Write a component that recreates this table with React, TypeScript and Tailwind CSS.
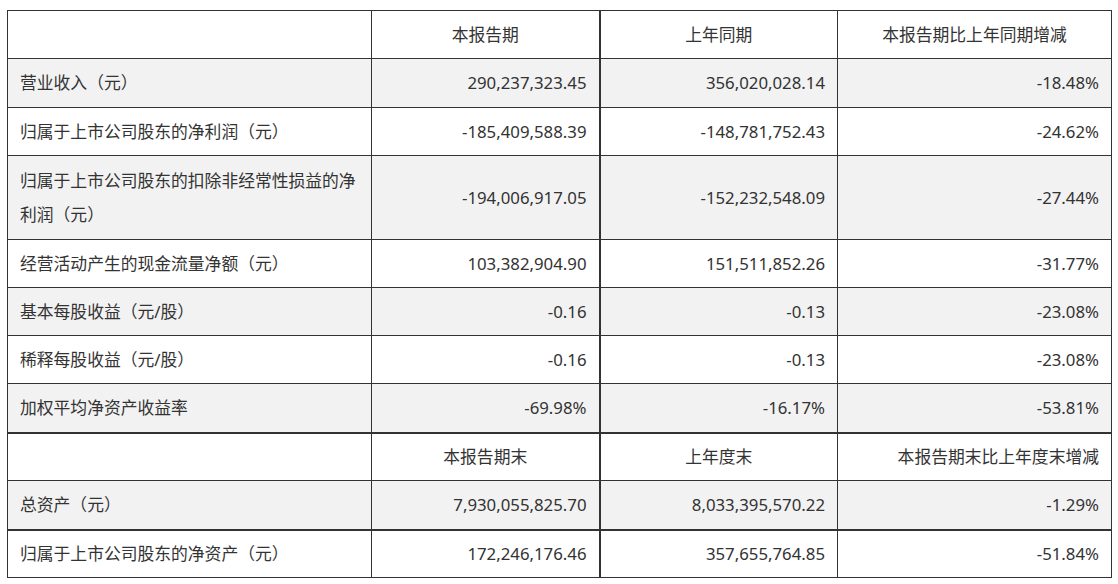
const rows1: [string, string, string, string][] = [
  ['营业收入（元）', '290,237,323.45', '356,020,028.14', '-18.48%'],
  ['归属于上市公司股东的净利润（元）', '-185,409,588.39', '-148,781,752.43', '-24.62%'],
  ['归属于上市公司股东的扣除非经常性损益的净利润（元）', '-194,006,917.05', '-152,232,548.09', '-27.44%'],
  ['经营活动产生的现金流量净额（元）', '103,382,904.90', '151,511,852.26', '-31.77%'],
  ['基本每股收益（元/股）', '-0.16', '-0.13', '-23.08%'],
  ['稀释每股收益（元/股）', '-0.16', '-0.13', '-23.08%'],
  ['加权平均净资产收益率', '-69.98%', '-16.17%', '-53.81%'],
];

const heights1 = ['h-[49px]', 'h-[48px]', 'h-[84px] leading-[34px]', 'h-[48px]', 'h-[48px]', 'h-[48px]', 'h-[49px]'];

const td = 'border border-[#333] px-3 align-middle';

export default function App() {
  return (
    <div className="bg-white w-[1118px] h-[584px] pt-[10px] pl-[7px] text-[#333] text-[16.8px] leading-[32px] font-['Noto_Sans','Noto_Sans_CJK_SC',sans-serif]">
      <table className="border-collapse table-fixed w-[1104px]">
        <colgroup>
          <col className="w-[364px]" />
          <col className="w-[228px]" />
          <col className="w-[238px]" />
          <col className="w-[274px]" />
        </colgroup>
        <tbody>
          <tr className="h-[48px] bg-white">
            <td className={td}></td>
            <td className={`${td} text-center`}>本报告期</td>
            <td className={`${td} border-l-2 text-center`}>上年同期</td>
            <td className={`${td} text-center`}>本报告期比上年同期增减</td>
          </tr>
          {rows1.map((r, i) => (
            <tr key={r[0]} className={`${heights1[i]} ${i % 2 === 0 ? 'bg-[#f2f2f2]' : 'bg-white'}`}>
              <td className={`${td} text-left`}>{r[0]}</td>
              <td className={`${td} text-right`}>{r[1]}</td>
              <td className={`${td} border-l-2 text-right`}>{r[2]}</td>
              <td className={`${td} text-right`}>{r[3]}</td>
            </tr>
          ))}
          <tr className="h-[48px] bg-white">
            <td className={`${td} border-t-2`}></td>
            <td className={`${td} border-t-2 text-center`}>本报告期末</td>
            <td className={`${td} border-t-2 border-l-2 text-center`}>上年度末</td>
            <td className={`${td} border-t-2 text-right`}>本报告期末比上年度末增减</td>
          </tr>
          <tr className="h-[49px] bg-[#f2f2f2]">
            <td className={`${td} text-left`}>总资产（元）</td>
            <td className={`${td} text-right`}>7,930,055,825.70</td>
            <td className={`${td} border-l-2 text-right`}>8,033,395,570.22</td>
            <td className={`${td} text-right`}>-1.29%</td>
          </tr>
          <tr className="h-[48px] bg-white">
            <td className={`${td} border-t-2 text-left`}>归属于上市公司股东的净资产（元）</td>
            <td className={`${td} border-t-2 text-right`}>172,246,176.46</td>
            <td className={`${td} border-t-2 border-l-2 text-right`}>357,655,764.85</td>
            <td className={`${td} border-t-2 text-right`}>-51.84%</td>
          </tr>
        </tbody>
      </table>
    </div>
  );
}
